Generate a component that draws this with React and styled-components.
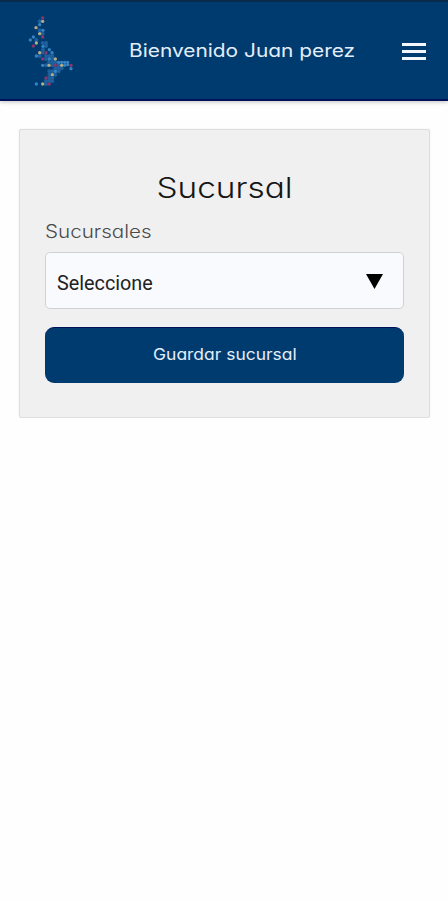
import React from "react";
import styled, { createGlobalStyle } from "styled-components";

const SKY = "#3583c3";
const DEEP = "#1f609c";
const SAND = "#b3ad87";
const ROSE = "#8a366c";

// [x, y, color] of every dot in the bird
const DOTS = [
  [118, 64, DEEP], [118, 91, DEEP], [127, 101, DEEP], [108, 120, DEEP],
  [137, 129, DEEP], [127, 129, DEEP], [137, 138, DEEP], [128, 149, DEEP],
  [127, 158, DEEP], [118, 168, DEEP], [137, 168, DEEP], [147, 168, DEEP],
  [156, 168, DEEP], [137, 177, DEEP], [156, 177, DEEP], [156, 187, DEEP],
  [146, 187, DEEP], [137, 196, DEEP], [156, 196, DEEP], [165, 187, DEEP],
  [175, 196, DEEP], [175, 205, DEEP], [165, 205, DEEP], [184, 205, DEEP],
  [175, 214, DEEP], [165, 214, DEEP], [156, 214, DEEP], [147, 214, DEEP],
  [165, 224, DEEP], [147, 224, DEEP], [147, 234, DEEP], [156, 234, DEEP],
  [137, 243, DEEP], [147, 243, DEEP], [156, 243, DEEP], [137, 252, DEEP],
  [118, 74, SKY], [128, 91, SKY], [99, 111, SKY], [90, 120, SKY],
  [128, 139, SKY], [147, 149, SKY], [155, 158, SKY], [108, 168, SKY],
  [147, 177, SKY], [127, 196, SKY], [175, 187, SKY], [184, 187, SKY],
  [193, 187, SKY], [202, 187, SKY], [193, 196, SKY], [202, 194, SKY],
  [212, 206, SKY], [165, 214, SKY], [108, 252, SKY],
  [127, 64, SAND], [107, 83, SAND], [118, 101, SAND], [108, 129, SAND],
  [118, 158, SAND], [165, 177, SAND], [146, 196, SAND], [184, 196, SAND],
  [156, 224, SAND], [127, 252, SAND],
  [127, 54, ROSE], [127, 111, ROSE], [99, 138, ROSE], [137, 158, ROSE],
  [127, 177, ROSE], [165, 196, ROSE], [212, 196, ROSE], [137, 234, ROSE],
  [147, 252, ROSE],
];

function BirdLogo() {
  return (
    <Logo viewBox="80 45 140 215" aria-hidden="true">
      {DOTS.map(([x, y, color], i) => (
        <circle key={i} cx={x} cy={y} r={color === DEEP ? 6 : 5} fill={color} />
      ))}
    </Logo>
  );
}

export default function App() {
  return (
    <>
      <GlobalStyle />
      <Header>
        <BirdLogo />
        <Welcome>Bienvenido Juan perez</Welcome>
        <MenuButton aria-label="Menú">
          <MenuBar />
          <MenuBar />
          <MenuBar />
        </MenuButton>
      </Header>
      <Main>
        <Card>
          <Title>Sucursal</Title>
          <Label>Sucursales</Label>
          <Select>
            Seleccione
            <Caret viewBox="0 0 17 15">
              <path d="M0 0h17L8.5 15z" />
            </Caret>
          </Select>
          <SaveButton>
            <ButtonText>Guardar sucursal</ButtonText>
          </SaveButton>
        </Card>
      </Main>
    </>
  );
}

const GlobalStyle = createGlobalStyle`
  * {
    box-sizing: border-box;
  }

  body {
    margin: 0;
    background: #fefefe;
    font-family: Inter, "Open Sans", sans-serif;
    font-feature-settings: "cv11";
  }
`;

const Header = styled.header`
  height: 101px;
  padding: 0 22px 0 27px;
  display: flex;
  align-items: center;
  background: #003b70;
  border-top: 2px solid #0b2b4a;
  border-bottom: 2px solid #00125a;
  box-shadow: 0 1px 4px rgba(0, 0, 0, 0.25);
`;

const Logo = styled.svg`
  width: 46.67px;
  height: 71.67px;
  flex: none;
  margin-top: 1px;
`;

/* the wide look of the headings comes from stretching Inter sideways */
const Welcome = styled.div`
  margin: 0 0 0 55px;
  color: #e4eef8;
  font-size: 18px;
  line-height: 24px;
  white-space: nowrap;
  transform: scaleX(1.16);
  transform-origin: left;
`;

const MenuButton = styled.button`
  width: 24px;
  margin: 2px 0 0 auto;
  padding: 0;
  display: flex;
  flex-direction: column;
  gap: 4px;
  background: none;
  border: 0;
`;

const MenuBar = styled.span`
  height: 3px;
  background: #f4f8fc;
`;

const Main = styled.main`
  padding: 28px 18px 0 19px;
`;

const Card = styled.section`
  height: 289px;
  padding: 40px 25px 0;
  background: #f0f0f0;
  border: 1px solid #dedede;
  border-radius: 2px;
  box-shadow: 0 0 2px rgba(0, 0, 0, 0.08);
`;

const Title = styled.h1`
  margin: 0;
  color: #161616;
  font-size: 29px;
  font-weight: 300;
  line-height: 36px;
  text-align: center;
  transform: scaleX(1.15);
`;

const Label = styled.label`
  display: block;
  margin-top: 14px;
  color: #4a4a4a;
  font-size: 18px;
  font-weight: 300;
  line-height: 24px;
  transform: scaleX(1.145);
  transform-origin: left;
`;

const Select = styled.div`
  height: 57px;
  margin-top: 8px;
  padding: 5px 20px 0 11px;
  display: flex;
  align-items: center;
  justify-content: space-between;
  color: #222;
  background: #f8fafd;
  border: 1px solid #cfd1d4;
  border-radius: 5px;
  font-family: Roboto, sans-serif;
  font-size: 19.8px;
`;

const Caret = styled.svg`
  width: 17px;
  height: 15px;
  margin-top: -3px;
`;

const SaveButton = styled.button`
  width: 100%;
  height: 56px;
  margin-top: 18px;
  padding: 0 0 4px;
  color: #e4eef8;
  background: #003b70;
  border: 0;
  border-top: 1px solid #00125a;
  border-radius: 9px;
  font: inherit;
  font-feature-settings: inherit;
  font-size: 16px;
`;

const ButtonText = styled.span`
  display: inline-block;
  transform: scaleX(1.09);
`;
